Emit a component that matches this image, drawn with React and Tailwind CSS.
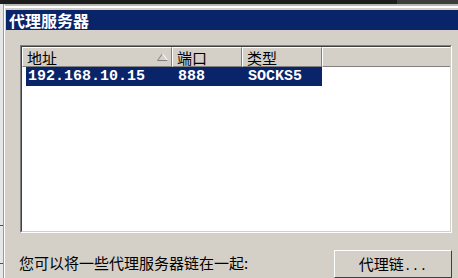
import React from "react";

const cjk = { fontFamily: '"Noto Sans CJK SC", "Noto Sans", sans-serif' };
const mono = { fontFamily: '"Liberation Mono", "DejaVu Sans Mono", monospace' };

function SortArrow() {
  return (
    <svg width="11" height="8" viewBox="0 0 11 8" className="shrink-0">
      <path d="M0.5 7.5 L5.5 0.5" stroke="#808080" strokeWidth="1" fill="none" />
      <path d="M5.5 0.5 L10.5 7.5" stroke="#ffffff" strokeWidth="1" fill="none" />
      <path d="M0.5 7.5 L10.5 7.5" stroke="#808080" strokeWidth="1" fill="none" />
    </svg>
  );
}

function HeaderCell({ label, width, arrow }) {
  return (
    <div
      className="flex items-center justify-between h-full border-t border-l border-t-white border-l-white border-r border-b border-r-[#808080] border-b-[#808080] pl-[4px] pr-[3px] shrink-0"
      style={{ width }}
    >
      <span className="text-[15px] leading-none text-black" style={cjk}>
        {label}
      </span>
      {arrow && <SortArrow />}
    </div>
  );
}

export default function App() {
  const columns = [
    { label: "地址", width: 150, arrow: true },
    { label: "端口", width: 70 },
    { label: "类型", width: 80 },
  ];

  return (
    <div className="w-[458px] h-[278px] overflow-hidden bg-[#e6e6e6] flex flex-col">
      {/* desktop strip behind the dialog */}
      <div className="flex h-[4px] shrink-0">
        <div className="flex-1 bg-[#1c1c1c]" />
        <div className="w-[61px] bg-[#3c3c3c]" />
      </div>

      <div className="flex flex-1 min-h-0">
        <div className="w-[4px] shrink-0 bg-[#e6e6e6] border-r border-r-[#9a9a9a] flex flex-col">
          <div className="h-[221px]" />
          <div className="h-[1px] bg-[#505050]" />
          <div className="h-[37px]" />
          <div className="h-[1px] bg-[#505050]" />
        </div>

        {/* dialog window */}
        <div className="flex-1 flex flex-col bg-[#d4d0c8] border-t-2 border-t-[#b8b8b8] border-l border-l-white">
          <div className="h-[2px] bg-white" />
          <div className="h-[2px]" />

          {/* title bar */}
          <div className="ml-[1px] h-[23px] bg-[#0a246a] flex items-center pl-[3px]">
            <span className="text-white font-bold text-[16px] leading-none" style={cjk}>
              代理服务器
            </span>
          </div>

          {/* body */}
          <div className="flex-1 flex flex-col pl-[15px] pr-[6px] pt-[15px]">
            {/* list view, sunken border */}
            <div className="h-[188px] border border-t-[#808080] border-l-[#808080] border-r-white border-b-white">
              <div className="h-full border border-t-[#404040] border-l-[#404040] border-r-[#d4d0c8] border-b-[#d4d0c8] bg-white flex flex-col">
                <div className="h-[20px] flex bg-[#d4d0c8] shrink-0">
                  {columns.map((c) => (
                    <HeaderCell key={c.label} {...c} />
                  ))}
                  <div className="flex-1 h-full border-t border-l border-t-white border-l-white border-b border-b-[#808080]" />
                </div>

                <div className="flex pl-[4px] h-[19px]">
                  <div className="flex bg-[#0a246a] text-white font-bold text-[15px] leading-none" style={mono}>
                    <div className="w-[146px] pl-[2px] flex items-center">192.168.10.15</div>
                    <div className="w-[70px] pl-[6px] flex items-center">888</div>
                    <div className="w-[80px] pl-[6px] flex items-center">SOCKS5</div>
                  </div>
                </div>
              </div>
            </div>

            {/* chain row */}
            <div className="flex items-start justify-between mt-[17px]">
              <span className="text-[15px] leading-none text-black mt-[5px] -ml-[1px]" style={cjk}>
                您可以将一些代理服务器链在一起:
              </span>
              <button
                className="w-[118px] h-[28px] flex justify-center pt-[5px] border border-t-white border-l-white border-r-[#404040] border-b-[#404040] bg-[#d4d0c8] mr-[0px]"
              >
                <span className="text-[15px] leading-none text-black" style={cjk}>
                  代理链
                  <span className="text-[13px]" style={mono}>...</span>
                </span>
              </button>
            </div>
          </div>
        </div>
      </div>
    </div>
  );
}
